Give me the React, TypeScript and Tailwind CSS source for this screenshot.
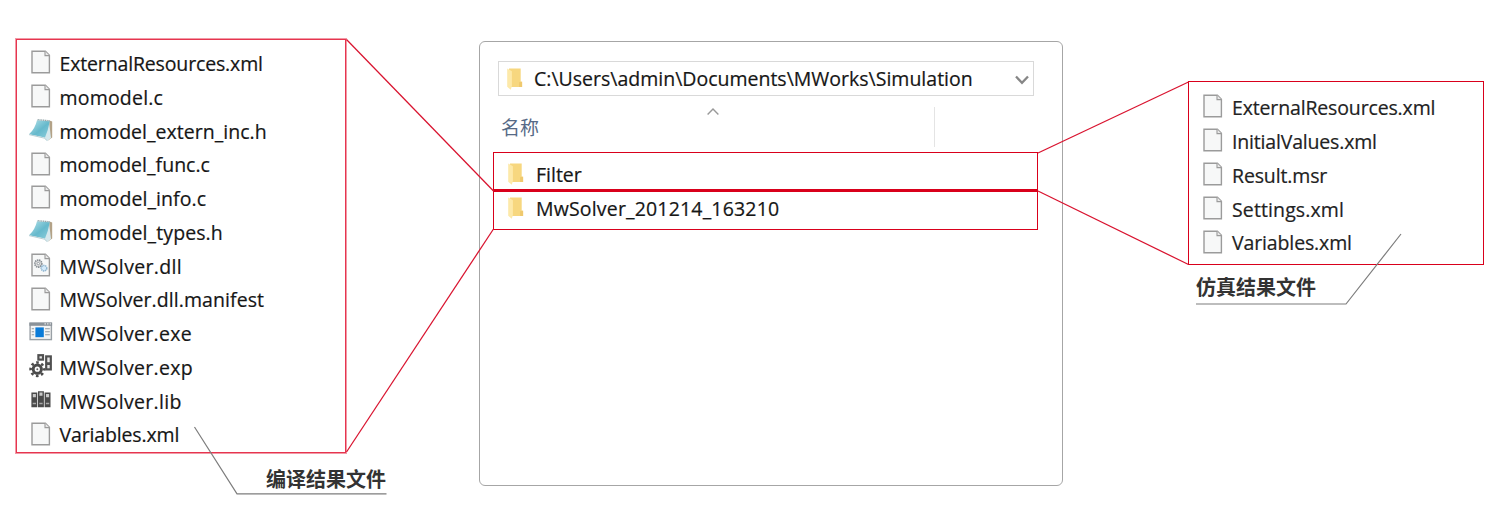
import type { ReactNode } from "react";

type FileKind = "doc" | "header" | "dll" | "exe" | "exp" | "lib";
type FileItem = { name: string; kind: FileKind; tracking: string };

const buildFiles: FileItem[] = [
  { name: "ExternalResources.xml", kind: "doc", tracking: "tracking-[-0.15px]" },
  { name: "momodel.c", kind: "doc", tracking: "tracking-[0.2px]" },
  { name: "momodel_extern_inc.h", kind: "header", tracking: "tracking-[0.02px]" },
  { name: "momodel_func.c", kind: "doc", tracking: "tracking-[0.02px]" },
  { name: "momodel_info.c", kind: "doc", tracking: "tracking-[0.08px]" },
  { name: "momodel_types.h", kind: "header", tracking: "tracking-[0.1px]" },
  { name: "MWSolver.dll", kind: "dll", tracking: "tracking-[0.35px]" },
  { name: "MWSolver.dll.manifest", kind: "doc", tracking: "tracking-[0.07px]" },
  { name: "MWSolver.exe", kind: "exe", tracking: "tracking-[0.32px]" },
  { name: "MWSolver.exp", kind: "exp", tracking: "tracking-[0.32px]" },
  { name: "MWSolver.lib", kind: "lib", tracking: "tracking-[0.32px]" },
  { name: "Variables.xml", kind: "doc", tracking: "tracking-[-0.14px]" },
];

const resultFiles: FileItem[] = [
  { name: "ExternalResources.xml", kind: "doc", tracking: "tracking-[-0.15px]" },
  { name: "InitialValues.xml", kind: "doc", tracking: "tracking-[-0.18px]" },
  { name: "Result.msr", kind: "doc", tracking: "tracking-[-0.14px]" },
  { name: "Settings.xml", kind: "doc", tracking: "tracking-[0.12px]" },
  { name: "Variables.xml", kind: "doc", tracking: "tracking-[-0.13px]" },
];

function Page() {
  return (
    <>
      <path d="M3 1.2H16.4L20.4 5.2V22.8H3Z" fill="#f7f8f8" stroke="#9b9b9b" strokeWidth="1.4" />
      <path d="M16 1.2V5.6H20.4" fill="#e9e9e9" stroke="#9b9b9b" strokeWidth="1.1" />
    </>
  );
}

function FileIcon({ kind }: { kind: FileKind }) {
  const drawings: Record<FileKind, ReactNode> = {
    doc: <Page />,
    header: (
      <>
        <path d="M20.4 2.4 23.2 3.4V19.6L19 22.4Z" fill="#b3a287" />
        <path d="M20 3.2 22 20 18 23.2 15 19.4Z" fill="#d5e8ed" />
        <path d="M8 2.2 20.8 3.2Q19.2 12 16 19.6L0 16.2Q6 11 8 2.2Z" fill="url(#pad)" />
        <path d="M8.6 1.7 21 2.8" stroke="#93a5a9" strokeWidth="1.4" strokeDasharray="1.2 .6" />
        <path d="M0 16.6 15.6 20.2 18 22.6" fill="none" stroke="#b9cfd4" strokeWidth="1" />
      </>
    ),
    dll: (
      <>
        <Page />
        <circle cx="9.3" cy="10.6" r="3.5" fill="#dedede" stroke="#858c92" strokeWidth="1.7" strokeDasharray="1.4 .7" />
        <circle cx="9.3" cy="10.6" r="1.2" fill="#fff" stroke="#8b9298" strokeWidth=".8" />
        <circle cx="15" cy="15.2" r="2.8" fill="#d4eafa" stroke="#8fb4cf" strokeWidth="1.5" strokeDasharray="1.4 .6" />
      </>
    ),
    exe: (
      <>
        <rect x="1.1" y="3.2" width="21.3" height="16.4" fill="#f4f4f4" stroke="#99a0a6" strokeWidth="1.4" />
        <path d="M.4 4.2H23.1" stroke="#8a9299" strokeWidth="3.2" />
        <path d="M15.5 3.9h1.4M18.1 3.9h1.4M20.7 3.9h1.2" stroke="#fff" strokeWidth="1" />
        <rect x="6.4" y="7.4" width="8.4" height="9.8" fill="#0a7bd8" />
        <path d="M2.7 8.8H5.1M2.7 11.8H5.1M2.7 14.8H5.1M16.1 8.8H20.8M16.1 11.8H20.8M16.1 14.8H20.8" stroke="#8f9aa3" strokeWidth="1.1" />
      </>
    ),
    exp: (
      <>
        <circle cx="8.3" cy="15.2" r="4.1" fill="none" stroke="#4c4c4c" strokeWidth="3" />
        <circle cx="8.3" cy="15.2" r="6.7" fill="none" stroke="#4c4c4c" strokeWidth="2.6" strokeDasharray="2.6 2.66" strokeDashoffset="1.3" />
        <circle cx="8.3" cy="15.2" r="1" fill="#666" />
        <rect x="9.4" y="1.2" width="4.6" height="4.4" fill="#e8e8e8" stroke="#505050" strokeWidth="2.2" />
        <rect x="17.2" y="2.4" width="4.6" height="13" fill="#e8e8e8" stroke="#505050" strokeWidth="2.2" />
        <path d="M17.2 9.6H21.8" stroke="#505050" strokeWidth="2.8" />
      </>
    ),
    lib: (
      <>
        <path d="M2.4 4.6H8.3V19.2H2.4Z M9 3.2H14.9V19.2H9Z M15.6 4.6H21.5V19.2H15.6Z" fill="#4a4a4a" />
        <path d="M3.8 6H6.9V9.2H3.8Z M10.4 4.6H13.5V7.8H10.4Z M17 6H20.1V9.2H17Z" fill="#c9c9c9" />
        <path d="M3.7 15.6H7M10.3 15.6H13.6M16.9 15.6H20.2" stroke="#a9a9a9" strokeWidth="1.5" />
      </>
    ),
  };
  return (
    <svg viewBox="0 0 24 24" className="h-6 w-6 shrink-0">
      <defs>
        <linearGradient id="pad" x1="0" y1="0" x2="1" y2="1">
          <stop offset="0" stopColor="#b9e4eb" />
          <stop offset=".55" stopColor="#66b9cc" />
          <stop offset="1" stopColor="#8bcddb" />
        </linearGradient>
      </defs>
      {drawings[kind]}
    </svg>
  );
}

function FolderIcon() {
  return (
    <svg viewBox="0 0 16 22" className="h-[22px] w-4 shrink-0">
      <path d="M2 .6H13.7V13.6L15.1 14.3V19.1H2Z" fill="#f7d77f" />
      <path d="M12.1 14.2 15.1 13.6V19.1H12.1Z" fill="#efc96e" />
      <path d="M.2 .6 4.9 3.2V18L3.8 21.8.2 18.8Z" fill="#fde9a9" />
    </svg>
  );
}

function FileRow({ item }: { item: FileItem }) {
  return (
    <li className="flex flex-1 items-center gap-[7px]">
      <div className="-mt-[3px]">
        <FileIcon kind={item.kind} />
      </div>
      <span className={`whitespace-nowrap ${item.tracking}`}>{item.name}</span>
    </li>
  );
}

export default function App() {
  return (
    <main className="relative flex h-[517px] w-[1511px] items-start overflow-hidden bg-white font-['Open_Sans','Noto_Sans_CJK_SC',sans-serif] text-[19.5px] leading-none text-[#161616]">
      <section className="ml-[15px] mt-[38px] flex w-[371px] shrink-0 flex-col">
        <ul className="flex h-[416px] w-[332px] flex-col border border-[#f299a6] pt-2 pb-px pl-[12.5px] shadow-[inset_0_0_0_1px_#e6354f] [-webkit-text-stroke:0.2px]">
          {buildFiles.map((f) => (
            <FileRow key={f.name} item={f} />
          ))}
        </ul>
        <h2 className="mt-[15.5px] self-end text-xl leading-5 font-bold text-[#333]">编译结果文件</h2>
      </section>

      <section className="mt-[41px] ml-[93px] flex h-[445px] w-[584px] shrink-0 flex-col rounded-[6px] border border-[#a6a6a6] [-webkit-text-stroke:0.2px]">
        <div className="mt-[19px] ml-[18px] flex h-[35px] w-[536px] items-center border border-[#d9d9d9] pr-1 pl-[8px]">
          <FolderIcon />
          <span className="ml-[11px] flex-1 whitespace-nowrap">C:\Users\admin\Documents\MWorks\Simulation</span>
          <svg viewBox="0 0 14 10" className="mt-[3px] h-[10px] w-[14px]">
            <path d="M1 1.5 7 7.8 13 1.5" fill="none" stroke="#868686" strokeWidth="2.3" />
          </svg>
        </div>
        <div className="mt-[11px] flex h-10 items-start">
          <div className="mt-[12px] ml-[21px] w-[206px] text-[19px] leading-[19px] text-[#566a86] [-webkit-text-stroke:0px]">名称</div>
          <svg viewBox="0 0 12 8" className="mt-px h-2 w-3">
            <path d="M.6 6.6 6 1 11.4 6.6" fill="none" stroke="#999" strokeWidth="1.4" />
          </svg>
          <div className="ml-[215px] h-10 w-px bg-[#e4e4e4]" />
        </div>
        <div className="mt-[5px] ml-[13px] w-[545px]">
          <div className="flex h-[40px] items-center border border-b-[3px] border-[#d9001b] pt-[6px] pl-[14px]">
            <FolderIcon />
            <span className="mt-px ml-[12px]">Filter</span>
          </div>
          <div className="flex h-[38px] items-center border border-t-0 border-[#d9001b] pb-[5px] pl-[14px]">
            <FolderIcon />
            <span className="mt-0.5 ml-[12px] tracking-[0.17px]">MwSolver_201214_163210</span>
          </div>
        </div>
      </section>

      <section className="mt-[81px] ml-[125px] flex w-[296px] shrink-0 flex-col">
        <ul className="flex h-[184px] flex-col border border-[#d9001b] pt-[9px] pb-1 pl-[12px] text-[#222] [-webkit-text-stroke:0.2px]">
          {resultFiles.map((f) => (
            <FileRow key={f.name} item={f} />
          ))}
        </ul>
        <h2 className="mt-[12.5px] ml-2 text-xl leading-5 font-bold text-[#333]">仿真结果文件</h2>
      </section>

      <svg viewBox="0 0 1511 517" className="pointer-events-none absolute inset-0 h-[517px] w-[1511px]" fill="none">
        <g stroke="#d9132f" strokeWidth="1.25">
          <path d="M346.5 39.5 493.5 191" />
          <path d="M346.5 452 493.5 229" />
          <path d="M1038 153 1188.5 82" />
          <path d="M1038 191 1188.5 264.5" />
        </g>
        <g stroke="#7d7d7d" strokeWidth="1.2">
          <path d="M194.5 427 237 493.8H386.5" />
          <path d="M1196 304H1346L1401 234" />
        </g>
      </svg>
    </main>
  );
}
